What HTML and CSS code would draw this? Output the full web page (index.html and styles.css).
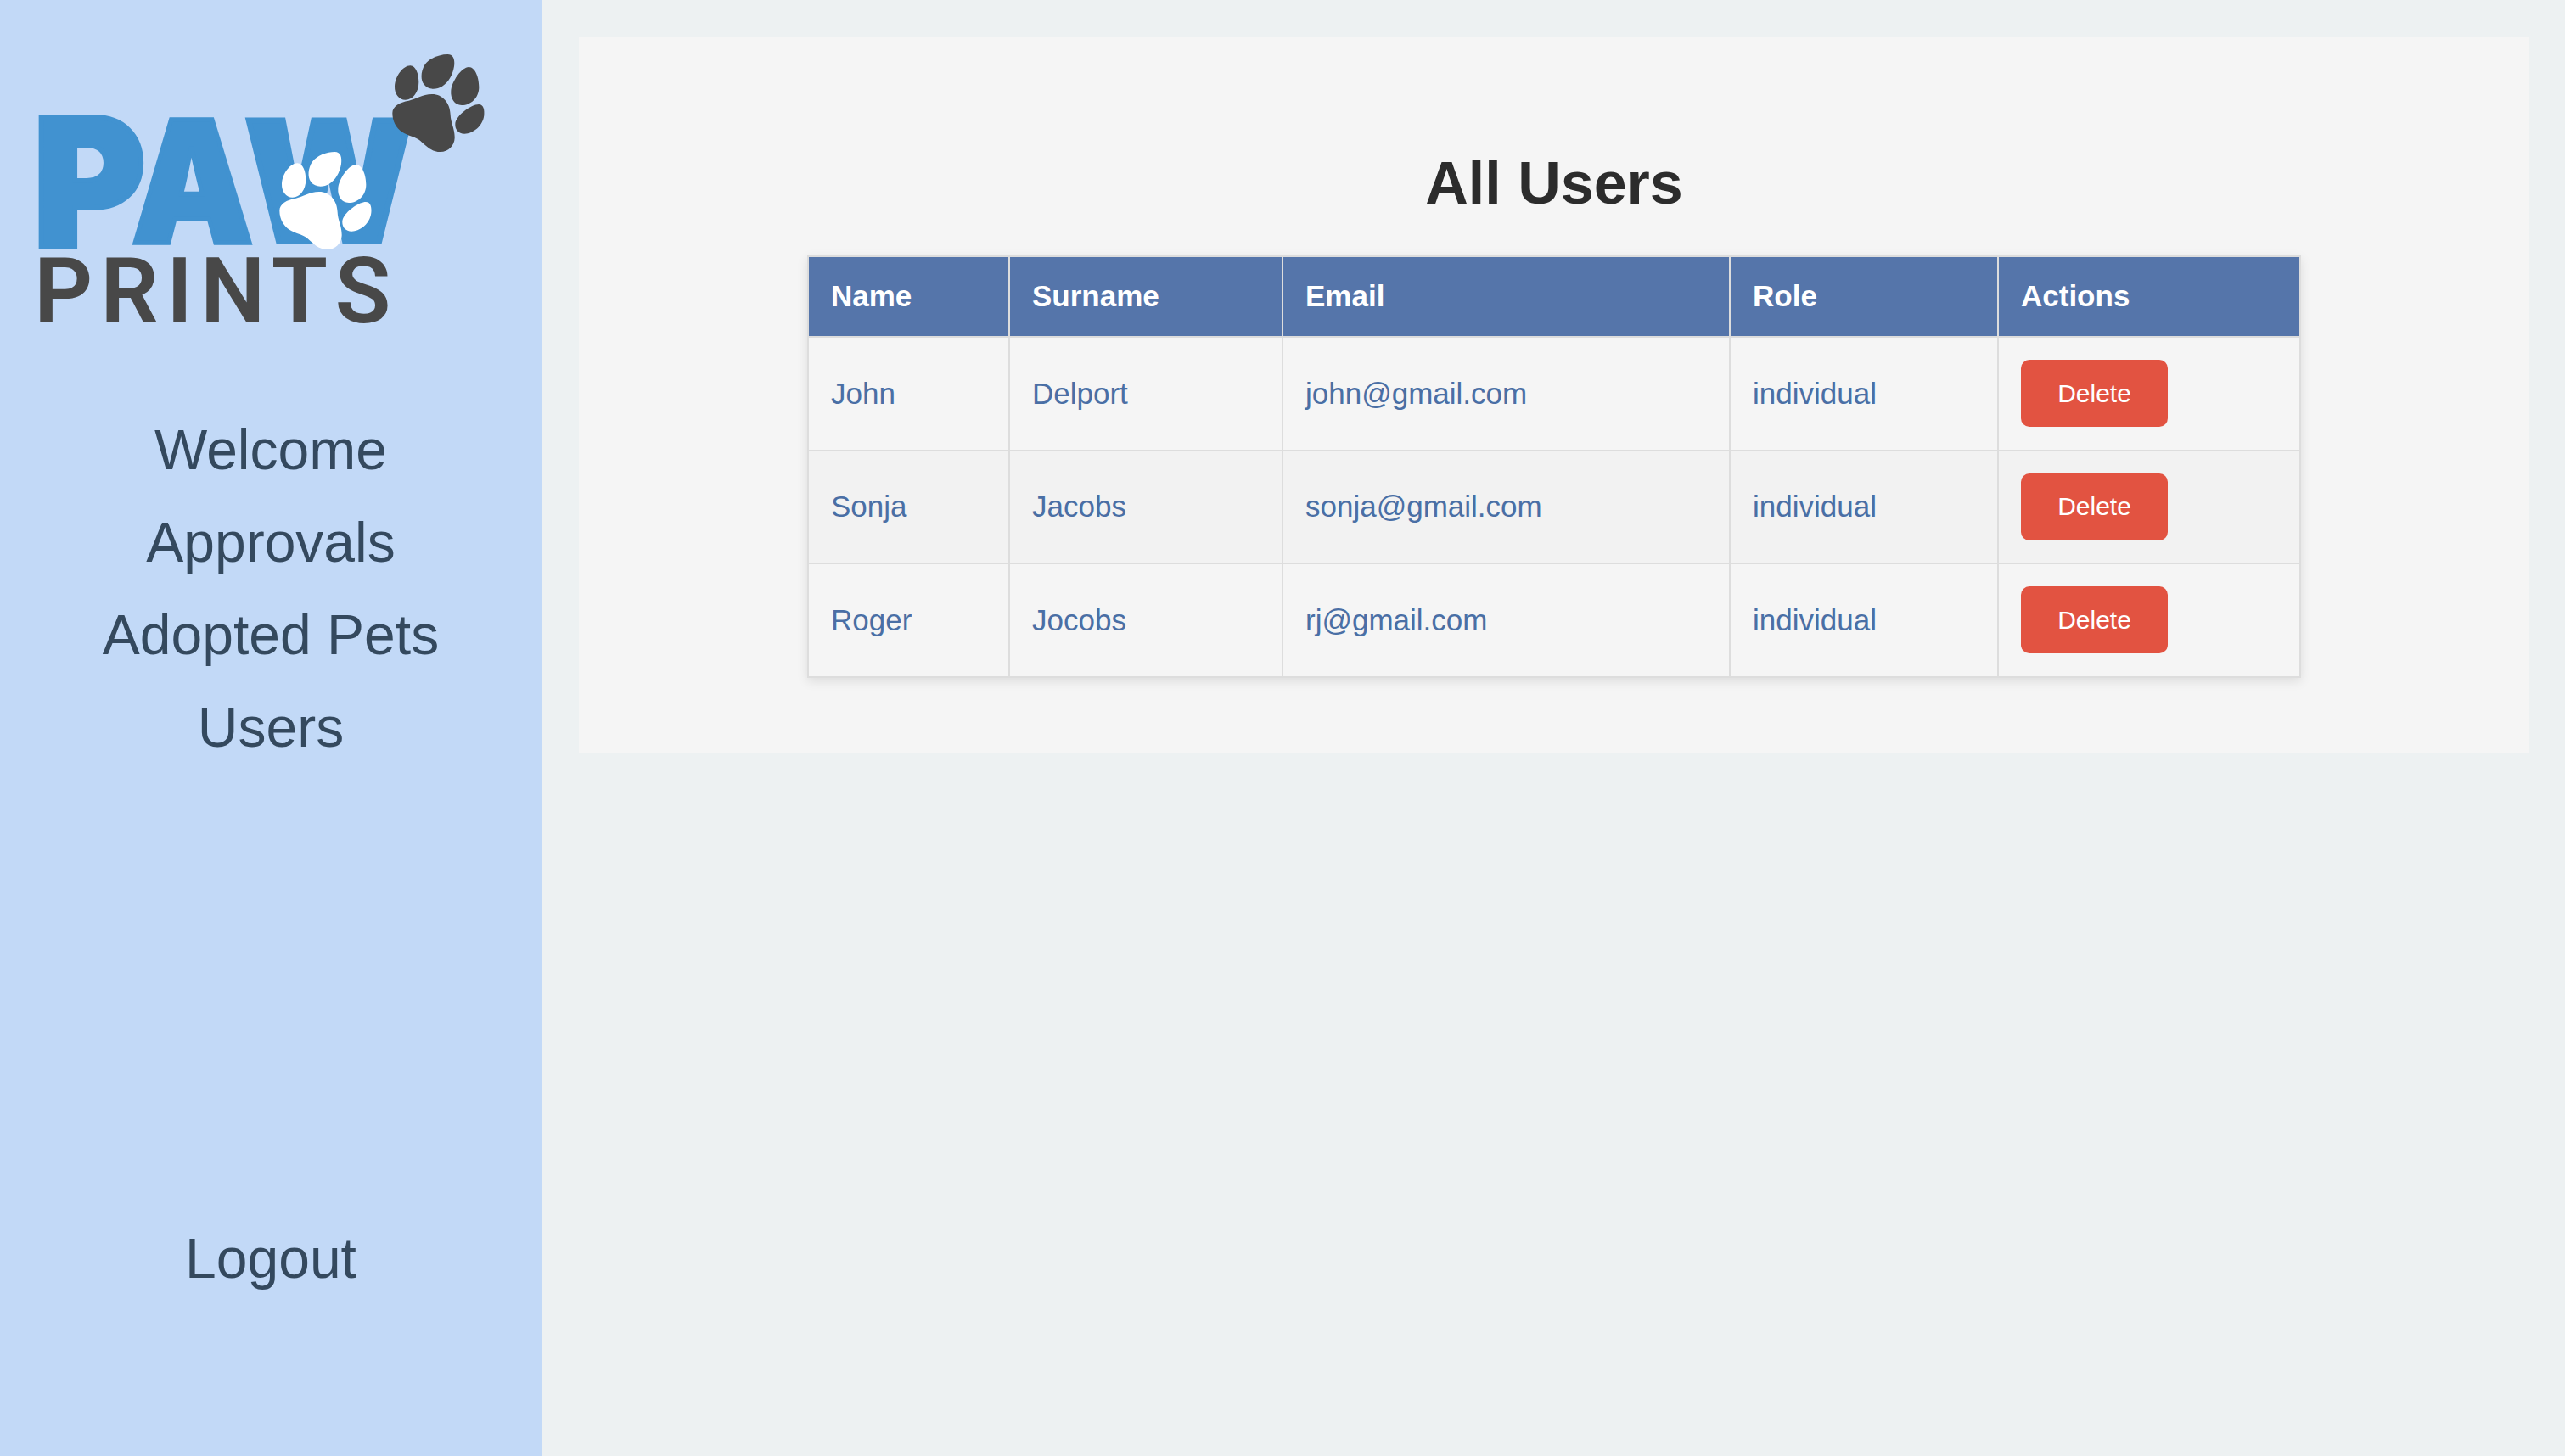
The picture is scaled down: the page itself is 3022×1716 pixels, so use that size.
FILE: index.html
```html
<!DOCTYPE html>
<html lang="en">
<head>
    <meta charset="UTF-8">
    <title>Paw Prints - All Users</title>
    <link rel="stylesheet" href="styles.css">
</head>
<body>
<div class="page">
    <aside class="sidebar">
        <svg class="logo" viewBox="0 0 638 476" width="638" height="476" role="img" aria-label="Paw Prints logo">
            <defs>
                <g id="paw" transform="translate(440 50) scale(.3333)">
                    <path d="M67 250C67 225 92 212 125 206C150 201 172 183 207 183C245 183 271 215 272 255C273 285 288 305 287 338C286 365 265 387 236 387C205 387 185 365 165 347C150 334 122 330 102 317C80 303 67 278 67 250Z"/>
                    <path d="M130 82C150 82 160 112 160 140C160 175 140 203 113 203C90 203 74 182 75 155C76 120 105 82 130 82Z"/>
                    <path d="M262 42C284 42 288 62 285 85C280 115 265 142 243 155C222 168 192 168 178 148C165 130 168 100 182 78C198 55 235 42 262 42Z"/>
                    <path d="M337 87C360 87 373 125 373 158C373 195 345 222 312 222C286 222 272 198 274 172C276 138 312 87 337 87Z"/>
                    <path d="M372 219C390 219 393 240 391 258C387 295 352 323 322 323C300 323 288 308 289 288C290 260 345 219 372 219Z"/>
                </g>
            </defs>
            <text class="logo-paw" transform="translate(39 290) scale(.93 .965)">P</text>
            <text class="logo-paw" transform="translate(155 286) scale(.83 .92)">A</text>
            <text class="logo-paw logo-w" transform="translate(289 284) scale(.84 .9)">W</text>
            <text class="logo-prints" x="40" y="380">PRINTS</text>
            <use href="#paw" class="paw-dark"/>
            <use href="#paw" class="paw-white" transform="translate(-133 115)"/>
        </svg>
        <nav class="nav">
            <a href="#">Welcome</a>
            <a href="#">Approvals</a>
            <a href="#">Adopted Pets</a>
            <a href="#">Users</a>
        </nav>
        <a class="logout" href="#">Logout</a>
    </aside>
    <main class="main">
        <section class="card">
            <h1>All Users</h1>
            <table class="users">
                <colgroup>
                    <col class="col-name">
                    <col class="col-surname">
                    <col class="col-email">
                    <col class="col-role">
                    <col class="col-actions">
                </colgroup>
                <thead>
                <tr>
                    <th>Name</th>
                    <th>Surname</th>
                    <th>Email</th>
                    <th>Role</th>
                    <th>Actions</th>
                </tr>
                </thead>
                <tbody>
                <tr>
                    <td>John</td>
                    <td>Delport</td>
                    <td>john@gmail.com</td>
                    <td>individual</td>
                    <td><button class="delete">Delete</button></td>
                </tr>
                <tr>
                    <td>Sonja</td>
                    <td>Jacobs</td>
                    <td>sonja@gmail.com</td>
                    <td>individual</td>
                    <td><button class="delete">Delete</button></td>
                </tr>
                <tr>
                    <td>Roger</td>
                    <td>Jocobs</td>
                    <td>rj@gmail.com</td>
                    <td>individual</td>
                    <td><button class="delete">Delete</button></td>
                </tr>
                </tbody>
            </table>
        </section>
    </main>
</div>
</body>
</html>
```

FILE: styles.css
```css
*{
    box-sizing: border-box;
}
body{
    margin: 0;
    background: #edf1f2;
    font-family: "Liberation Sans", Arial, sans-serif;
}
.page{
    display: flex;
    min-height: 100vh;
}
.sidebar{
    width: 638px;
    flex-shrink: 0;
    background: #c2d9f7;
    display: flex;
    flex-direction: column;
    align-items: center;
    padding-bottom: 178px;
}
.logo{
    display: block;
    flex-shrink: 0;
}
.logo-paw{
    font-family: Inter, sans-serif;
    font-weight: 900;
    font-size: 217px;
    fill: #4192d0;
    stroke: #4192d0;
    stroke-width: 6;
}
.logo-w{
    stroke-width: 8;
}
.logo-prints{
    font-family: Roboto, sans-serif;
    font-weight: 600;
    font-size: 108px;
    letter-spacing: 9px;
    fill: #484848;
}
.paw-dark{
    fill: #484848;
}
.paw-white{
    fill: #fff;
}
.nav{
    display: flex;
    flex-direction: column;
    align-items: center;
}
.nav a, .logout{
    color: #34495e;
    font-size: 66px;
    line-height: 109px;
    text-decoration: none;
}
.logout{
    margin-top: auto;
}
.main{
    flex: 1;
    padding: 44px 42px 44px 44px;
}
.card{
    background: #f5f5f5;
    padding: 131px 269px 88px;
}
.card h1{
    margin: 0 0 44px;
    text-align: center;
    color: #2c2c2c;
    font-size: 70px;
    line-height: 82px;
}
.users{
    width: 100%;
    table-layout: fixed;
    border-collapse: collapse;
    box-shadow: 0 4px 12px rgba(0,0,0,0.1);
    font-size: 35px;
}
.col-name{
    width: 237px;
}
.col-surname{
    width: 322px;
}
.col-email{
    width: 527px;
}
.col-role{
    width: 316px;
}
.users th, .users td{
    border: 2px solid #ddd;
    padding: 26px;
    text-align: left;
}
.users th{
    background: #5575aa;
    color: #fff;
    line-height: 41px;
    font-weight: bold;
    padding-top: 25px;
    padding-bottom: 27px;
}
.users td{
    color: #4a6fa5;
    line-height: 40px;
    padding-bottom: 26.5px;
}
.users tbody tr:nth-child(even){
    background: #f2f2f2;
}
.delete{
    display: block;
    width: 173px;
    height: 79px;
    border: 0;
    border-radius: 10px;
    background: #e25341;
    color: #fff;
    font-family: inherit;
    font-size: 30px;
    cursor: pointer;
}
```
